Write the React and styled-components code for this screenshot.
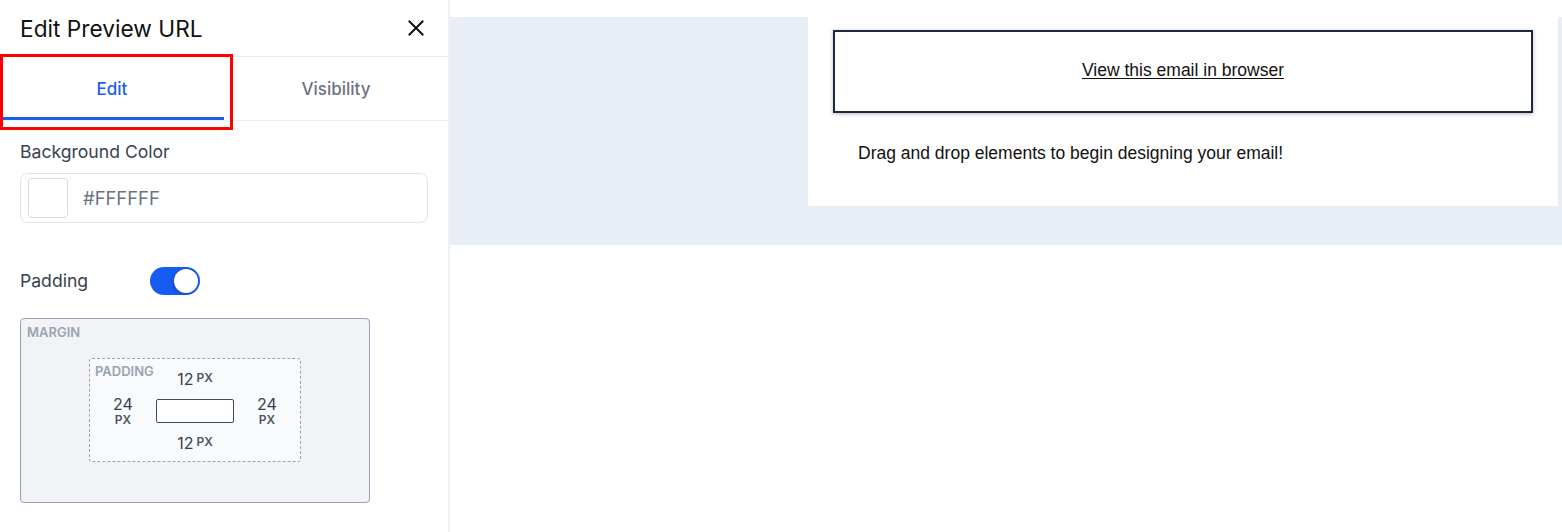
import React, { useState } from "react";
import styled, { createGlobalStyle } from "styled-components";

const GlobalStyle = createGlobalStyle`
  html, body {
    margin: 0;
    padding: 0;
    background: #ffffff;
  }
  body {
    font-family: Inter, "Noto Sans", sans-serif;
    color: #111827;
  }
  * {
    box-sizing: border-box;
  }
`;

const Layout = styled.div`
  display: flex;
  height: 532px;
  overflow: hidden;
`;

const Sidebar = styled.aside`
  position: relative;
  width: 450px;
  flex-shrink: 0;
  border-right: 2px solid #eef0f4;
  background: #ffffff;
`;

const Header = styled.div`
  display: flex;
  align-items: center;
  justify-content: space-between;
  height: 57px;
  padding: 0 24px 0 20px;
  border-bottom: 1px solid #e8eaee;
`;

const Title = styled.h2`
  margin: 0;
  font-size: 22.7px;
  font-weight: 400;
  color: #111111;
`;

const CloseButton = styled.button`
  display: flex;
  padding: 0;
  border: 0;
  background: none;
  cursor: pointer;
  color: #111111;
`;

const Tabs = styled.div`
  display: grid;
  grid-template-columns: 224px 1fr;
  height: 64px;
  border-bottom: 1px solid #eceef2;
`;

const Tab = styled.button`
  display: flex;
  align-items: center;
  justify-content: center;
  padding: 3px 0 0;
  border: 0;
  border-bottom: 3px solid ${(p) => (p.$active ? "#1b5cf2" : "transparent")};
  background: none;
  font-family: inherit;
  font-size: 17px;
  font-weight: 500;
  color: ${(p) => (p.$active ? "#1b5cf2" : "#6b7280")};
  cursor: pointer;
`;

// red outline drawn over the active tab
const Highlight = styled.div`
  position: absolute;
  left: 0;
  top: 54px;
  width: 233px;
  height: 76px;
  border: 3px solid #ff0000;
  pointer-events: none;
`;

const Body = styled.div`
  padding: 20px 20px 0;
`;

const FieldLabel = styled.div`
  width: ${(p) => (p.$width ? `${p.$width}px` : "auto")};
  font-size: 17.6px;
  line-height: 22px;
  color: #374151;
`;

const ColorInput = styled.div`
  display: flex;
  align-items: center;
  gap: 15px;
  width: 408px;
  height: 50px;
  margin-top: 10px;
  padding: 0 7px;
  border: 1px solid #e2e4ea;
  border-radius: 8px;
`;

const Swatch = styled.div`
  width: 40px;
  height: 40px;
  border: 1px solid #d6d9e0;
  border-radius: 4px;
  background: ${(p) => p.$color};
`;

const HexValue = styled.span`
  font-size: 18.4px;
  color: #6b7280;
`;

const ToggleRow = styled.div`
  display: flex;
  align-items: center;
  margin-top: 44px;
`;

const Switch = styled.button`
  display: flex;
  align-items: center;
  justify-content: ${(p) => (p.$on ? "flex-end" : "flex-start")};
  width: 50px;
  height: 28px;
  padding: 2px;
  border: 0;
  border-radius: 14px;
  background: ${(p) => (p.$on ? "#175cf0" : "#d1d5db")};
  cursor: pointer;
`;

const Knob = styled.span`
  width: 24px;
  height: 24px;
  border-radius: 50%;
  background: #ffffff;
  box-shadow: -1px 1px 3px rgba(0, 0, 0, 0.25);
`;

const MarginBox = styled.div`
  position: relative;
  display: flex;
  align-items: center;
  justify-content: center;
  width: 350px;
  height: 185px;
  margin-top: 23px;
  padding-bottom: 2px;
  border: 1px solid #9aa3b4;
  border-radius: 4px;
  background: #f1f3f7;
`;

const BoxLabel = styled.span`
  position: absolute;
  left: ${(p) => p.$left}px;
  top: ${(p) => p.$top}px;
  font-size: 13px;
  font-weight: 600;
  line-height: 15px;
  color: #9ca3af;
`;

const PaddingBox = styled.div`
  position: relative;
  display: grid;
  grid-template-columns: 1fr 78px 1fr;
  grid-template-rows: 18px 32px 18px;
  row-gap: 7px;
  align-items: center;
  justify-items: center;
  align-content: start;
  width: 212px;
  height: 104px;
  padding-top: 11px;
  border: 1px dashed #9ca3af;
  border-radius: 3px;
  background: #f8fafc;
`;

const Value = styled.div`
  display: flex;
  flex-direction: ${(p) => (p.$stacked ? "column" : "row")};
  align-items: ${(p) => (p.$stacked ? "center" : "flex-start")};
  gap: ${(p) => (p.$stacked ? "0" : "3px")};
  grid-column: ${(p) => p.$col};
  color: #374151;
`;

const Num = styled.span`
  font-size: 16px;
  line-height: 18px;
`;

const Unit = styled.span`
  font-size: 12px;
  font-weight: 600;
  line-height: 14px;
  color: #4b5563;
  margin-top: ${(p) => (p.$stacked ? "0" : "1px")};
`;

const ContentBox = styled.div`
  grid-column: 2;
  width: 78px;
  height: 24px;
  border: 1px solid #3f4a5c;
  border-radius: 2px;
  background: #ffffff;
`;

const Canvas = styled.main`
  flex: 1;
  padding-top: 17px;
`;

const CanvasArea = styled.div`
  display: flex;
  height: 228px;
  padding: 0 4px 0 358px;
  background: #e9eef6;
`;

const EmailPanel = styled.div`
  width: 750px;
  height: 189px;
  padding: 13px 25px 0;
  background: #ffffff;
  font-family: "Liberation Sans", Arial, sans-serif;
  font-size: 17.5px;
  color: #111111;
`;

const BrowserLinkBlock = styled.div`
  display: flex;
  align-items: center;
  justify-content: center;
  height: 83px;
  padding-bottom: 3px;
  border: 2px solid #1e293b;
  box-shadow: 0 1px 4px rgba(15, 23, 42, 0.3);
`;

const BrowserLink = styled.a`
  color: #111111;
  text-decoration: underline;
  text-underline-offset: 2px;
`;

const Placeholder = styled.p`
  margin: 30px 0 0;
  padding-left: 25px;
  line-height: 20px;
`;

function Spacing({ value, col, stacked }) {
  return (
    <Value $col={col} $stacked={stacked}>
      <Num>{value}</Num>
      <Unit $stacked={stacked}>PX</Unit>
    </Value>
  );
}

export default function App() {
  const [tab, setTab] = useState("edit");
  const [padding, setPadding] = useState(true);

  return (
    <>
      <GlobalStyle />
      <Layout>
        <Sidebar>
          <Header>
            <Title>Edit Preview URL</Title>
            <CloseButton aria-label="Close">
              <svg width="16" height="16" viewBox="0 0 16 16" fill="none">
                <path
                  d="M1.5 1.5l13 13M14.5 1.5l-13 13"
                  stroke="currentColor"
                  strokeWidth="2"
                  strokeLinecap="square"
                />
              </svg>
            </CloseButton>
          </Header>
          <Tabs>
            <Tab $active={tab === "edit"} onClick={() => setTab("edit")}>
              Edit
            </Tab>
            <Tab $active={tab === "visibility"} onClick={() => setTab("visibility")}>
              Visibility
            </Tab>
          </Tabs>
          <Highlight />
          <Body>
            <FieldLabel>Background Color</FieldLabel>
            <ColorInput>
              <Swatch $color="#FFFFFF" />
              <HexValue>#FFFFFF</HexValue>
            </ColorInput>
            <ToggleRow>
              <FieldLabel $width={130}>Padding</FieldLabel>
              <Switch $on={padding} onClick={() => setPadding(!padding)}>
                <Knob />
              </Switch>
            </ToggleRow>
            <MarginBox>
              <BoxLabel $left={6} $top={6}>MARGIN</BoxLabel>
              <PaddingBox>
                <BoxLabel $left={5} $top={5}>PADDING</BoxLabel>
                <Spacing value="12" col={2} />
                <Spacing value="24" col={1} stacked />
                <ContentBox />
                <Spacing value="24" col={3} stacked />
                <Spacing value="12" col={2} />
              </PaddingBox>
            </MarginBox>
          </Body>
        </Sidebar>
        <Canvas>
          <CanvasArea>
            <EmailPanel>
              <BrowserLinkBlock>
                <BrowserLink href="#">View this email in browser</BrowserLink>
              </BrowserLinkBlock>
              <Placeholder>Drag and drop elements to begin designing your email!</Placeholder>
            </EmailPanel>
          </CanvasArea>
        </Canvas>
      </Layout>
    </>
  );
}
